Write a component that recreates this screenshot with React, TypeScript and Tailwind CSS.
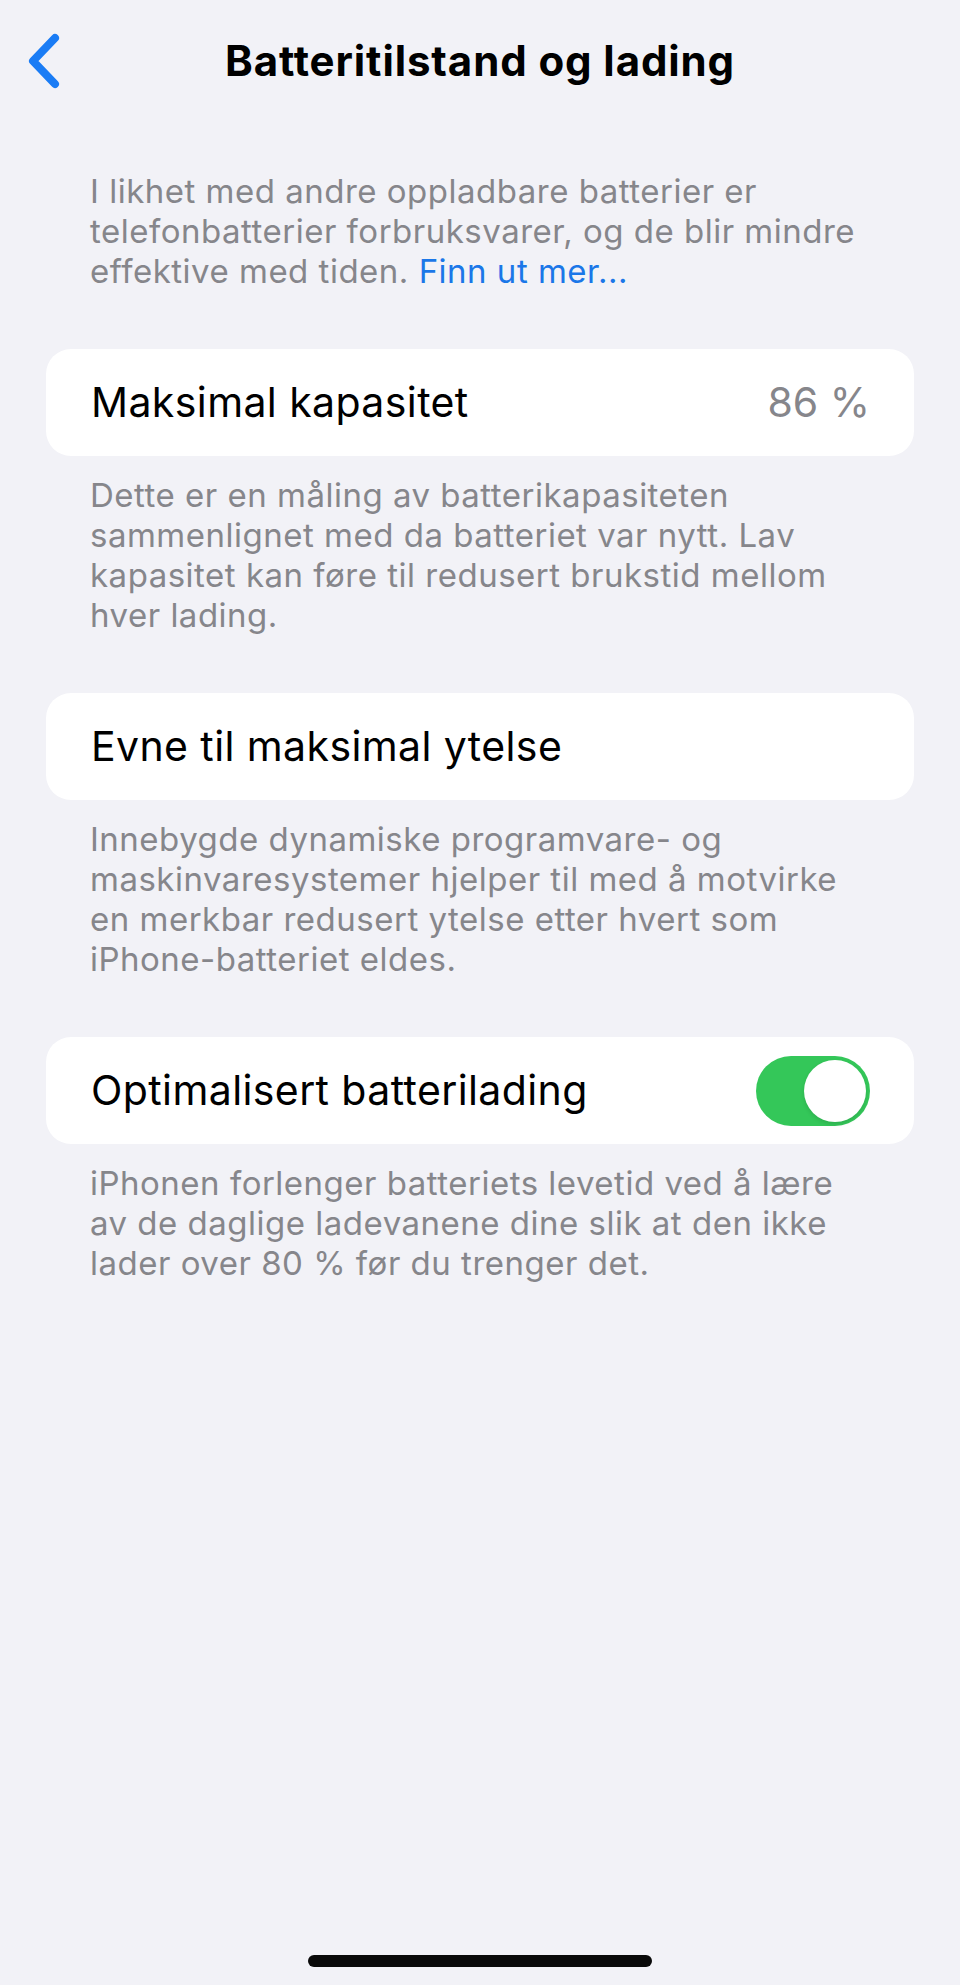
import { useState } from "react";

const FONT = { fontFamily: "Inter, 'Noto Sans', sans-serif" };

function Toggle({ on, onChange }: { on: boolean; onChange: () => void }) {
  return (
    <button
      type="button"
      role="switch"
      aria-checked={on}
      onClick={onChange}
      className={`flex h-[70px] w-[114px] shrink-0 items-center rounded-full p-[4px] transition-colors ${
        on ? "justify-end bg-[#34c759]" : "justify-start bg-[#e9e9eb]"
      }`}
    >
      <span className="size-[62px] rounded-full bg-white shadow-[0_2px_4px_rgba(0,0,0,0.12)]" />
    </button>
  );
}

function Row({ children }: { children: React.ReactNode }) {
  return (
    <div className="mx-[46px] flex h-[107px] items-center justify-between rounded-[25px] bg-white pl-[45px] pr-[44px]">
      {children}
    </div>
  );
}

function Footer({ children }: { children: React.ReactNode }) {
  return (
    <p className="mt-[19px] pl-[90px] pr-[90px] text-[33px] leading-[40px] tracking-[0.5px] text-[#86868b]">
      {children}
    </p>
  );
}

export default function App() {
  const [optimized, setOptimized] = useState(true);

  return (
    <div className="min-h-[1985px] w-full bg-[#f2f2f7]" style={FONT}>
      <div className="flex min-h-[1985px] flex-col">
        {/* nav bar */}
        <header className="grid grid-cols-[1fr_auto_1fr] items-center pt-[33px]">
          <button type="button" aria-label="Tilbake" className="ml-[25px] w-fit">
            <svg width="40" height="56" viewBox="0 0 40 56" fill="none">
              <path
                d="M30 5 L8 28 L30 51"
                stroke="#1a7cf5"
                strokeWidth="8"
                strokeLinecap="round"
                strokeLinejoin="round"
              />
            </svg>
          </button>
          <h1 className="text-[42px] font-bold leading-[48px] tracking-[0.9px] text-black">
            Batteritilstand og lading
          </h1>
          <div />
        </header>

        <p className="mt-[82px] pl-[90px] pr-[90px] text-[33px] leading-[40px] tracking-[0.5px] text-[#86868b]">
          I likhet med andre oppladbare batterier er telefonbatterier
          forbruksvarer, og de blir mindre effektive med tiden.{" "}
          <a href="#" className="text-[#1b77e8]">
            Finn ut mer...
          </a>
        </p>

        <div className="mt-[58px]">
          <Row>
            <span className="text-[41px] tracking-[0.4px] text-black">Maksimal kapasitet</span>
            <span className="text-[41px] text-[#86868b]">86 %</span>
          </Row>
          <Footer>
            Dette er en måling av batterikapasiteten sammenlignet med da
            batteriet var nytt. Lav kapasitet kan føre til redusert brukstid
            mellom hver lading.
          </Footer>
        </div>

        <div className="mt-[58px]">
          <Row>
            <span className="text-[41px] tracking-[0.4px] text-black">Evne til maksimal ytelse</span>
          </Row>
          <Footer>
            Innebygde dynamiske programvare- og maskinvaresystemer hjelper til
            med å motvirke en merkbar redusert ytelse etter hvert som
            iPhone-batteriet eldes.
          </Footer>
        </div>

        <div className="mt-[58px]">
          <Row>
            <span className="text-[41px] tracking-[0.4px] text-black">Optimalisert batterilading</span>
            <Toggle on={optimized} onChange={() => setOptimized((v) => !v)} />
          </Row>
          <Footer>
            iPhonen forlenger batteriets levetid ved å lære av de daglige
            ladevanene dine slik at den ikke lader over 80 % før du trenger det.
          </Footer>
        </div>

        {/* home indicator */}
        <div className="mt-auto flex justify-center pb-[18px]">
          <div className="h-[12px] w-[344px] rounded-full bg-[#0a0a0a]" />
        </div>
      </div>
    </div>
  );
}
